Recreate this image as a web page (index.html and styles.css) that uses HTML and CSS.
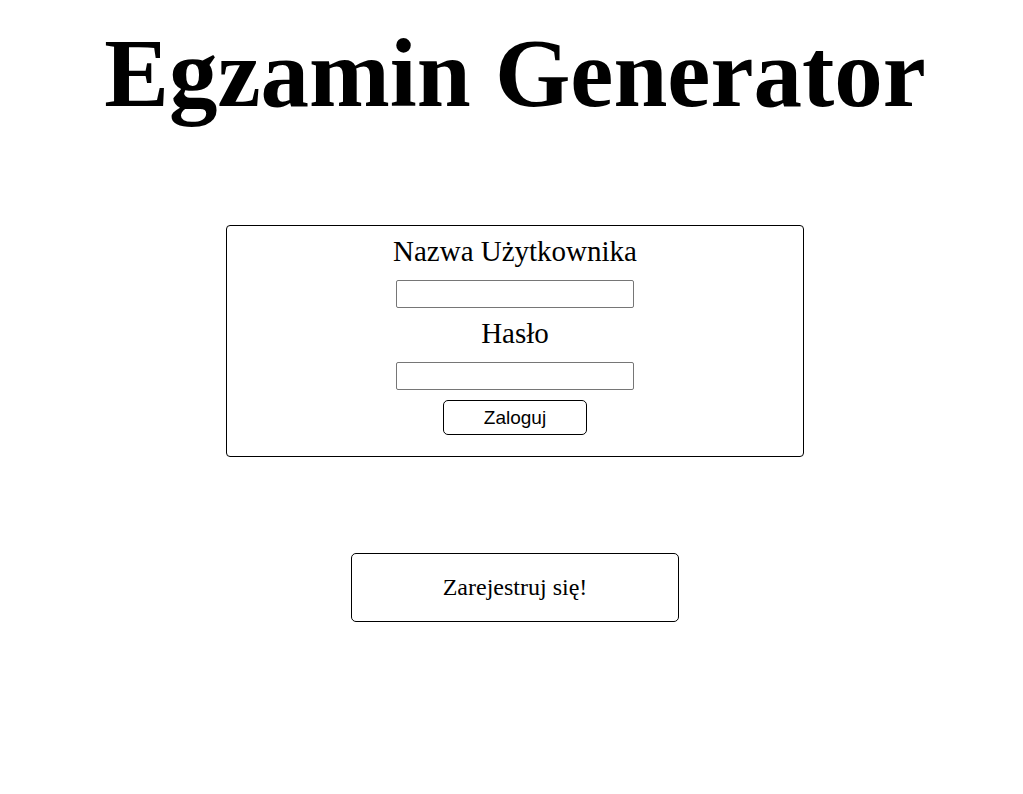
FILE: index.html
```html
<!DOCTYPE html>
<html lang="pl">
<head>
<meta charset="utf-8">
<title>Egzamin Generator</title>
<link rel="stylesheet" href="styles.css">
</head>
<body>
<main class="page">
  <h1 class="title">Egzamin Generator</h1>
  <form class="login-box">
    <label class="field-label label-user" for="user">Nazwa Użytkownika</label>
    <input class="field-input" id="user" type="text">
    <label class="field-label label-pass" for="pass">Hasło</label>
    <input class="field-input" id="pass" type="password">
    <button class="login-btn" type="button">Zaloguj</button>
  </form>
  <button class="register-btn" type="button">Zarejestruj się!</button>
</main>
</body>
</html>
```
FILE: styles.css
```css
html, body {
  margin: 0;
  padding: 0;
  background: #ffffff;
}

body {
  font-family: "Liberation Serif", "Times New Roman", serif;
  color: #000000;
}

.page {
  display: flex;
  flex-direction: column;
  align-items: center;
  padding-left: 7px;
}

.title {
  margin: 18px 0 0;
  font-size: 97px;
  font-weight: bold;
  line-height: 112px;
}

.login-box {
  box-sizing: border-box;
  width: 578px;
  height: 232px;
  margin-top: 95px;
  border: 1px solid #000000;
  border-radius: 4px;
  display: flex;
  flex-direction: column;
  align-items: center;
  padding-top: 9px;
}

.field-label {
  font-size: 29px;
  line-height: 33px;
}

.label-pass {
  margin-top: 9px;
}

.field-input {
  box-sizing: border-box;
  width: 238px;
  height: 28px;
  margin: 12px 0 0;
  padding: 1px 2px;
  border: 1px solid #767676;
  border-radius: 2px;
  background: #ffffff;
}

.label-pass + .field-input {
  margin-top: 12px;
}

.login-btn {
  box-sizing: border-box;
  width: 144px;
  height: 35px;
  margin-top: 10px;
  border: 1px solid #000000;
  border-radius: 5px;
  background: #ffffff;
  font-family: "Liberation Sans", Arial, sans-serif;
  font-size: 19px;
  color: #000000;
  padding: 0;
}

.register-btn {
  box-sizing: border-box;
  width: 328px;
  height: 69px;
  margin-top: 96px;
  border: 1px solid #000000;
  border-radius: 5px;
  background: #ffffff;
  font-family: "Liberation Serif", "Times New Roman", serif;
  font-size: 24px;
  color: #000000;
  padding: 0;
}
```
